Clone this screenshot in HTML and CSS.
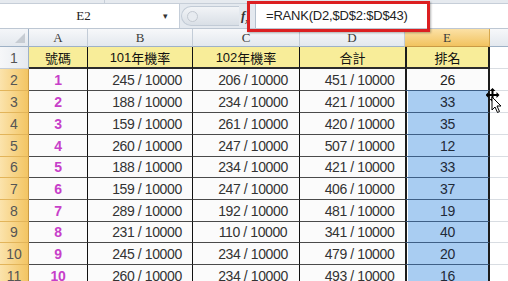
FILE: index.html
```html
<!DOCTYPE html>
<html lang="zh-Hant">
<head>
	<meta charset="UTF-8">
	<title>排名</title>
	<link rel="stylesheet" href="styles.css">
</head>
<body>
	<div class="ribbon-edge"><span></span></div>

	<div class="formula-bar">
		<div class="name-box">
			<span class="name">E2</span>
			<span class="drop">&#9662;</span>
		</div>
		<div class="grip"><span class="dot"></span></div>
		<div class="fx">f<sub>x</sub></div>
		<div class="formula">=RANK(D2,$D$2:$D$43)</div>
	</div>
	<div class="callout"></div>

	<div class="sheet">
		<div class="corner"><span class="tri"></span></div>
		<div class="colhead">A</div>
		<div class="colhead">B</div>
		<div class="colhead">C</div>
		<div class="colhead">D</div>
		<div class="colhead sel">E</div>
		<div class="colhead last"></div>

		<div class="rowhead">1</div>
		<div class="cell title cjk">號碼</div>
		<div class="cell title">101<span class="cjk">年機率</span></div>
		<div class="cell title">102<span class="cjk">年機率</span></div>
		<div class="cell title no-right cjk">合計</div>
		<div class="cell title rank-title cjk">排名</div>
		<div class="cell blank"></div>
	</div>
	<div class="sheet rows" id="rows"></div>

	<svg class="cursor" width="16" height="26" viewBox="0 0 16 26">
		<path d="M6 0 L9 3 H7 V6 H10 V4 L13 7 L10 10 V8 H7 V11 H9 L6 14 L3 11 H5 V8 H2 V10 L-1 7 L2 4 V6 H5 V3 H3 Z" fill="#000" transform="translate(0.5 0)"/>
		<path d="M7 9 V22 L10 19 L12.5 24.5 L14.5 23.5 L12 18 H16 Z" fill="#fff" stroke="#000" stroke-width="1" transform="translate(-1 0)"/>
	</svg>

	<script>
		const data = [
			[1, 245, 206, 451, 26],
			[2, 188, 234, 421, 33],
			[3, 159, 261, 420, 35],
			[4, 260, 247, 507, 12],
			[5, 188, 234, 421, 33],
			[6, 159, 247, 406, 37],
			[7, 289, 192, 481, 19],
			[8, 231, 110, 341, 40],
			[9, 245, 234, 479, 20],
			[10, 260, 234, 493, 16]
		];

		const rows = document.getElementById('rows');
		data.forEach((r, i) => {
			const cells = [
				['rowhead sel', i + 2],
				['cell num', r[0]],
				['cell val', r[1] + ' / 10000'],
				['cell val', r[2] + ' / 10000'],
				['cell val no-right', r[3] + ' / 10000'],
				[i === 0 ? 'cell rank active' : 'cell rank', r[4]],
				['cell blank', '']
			];
			cells.forEach(([cls, text]) => {
				const div = document.createElement('div');
				div.className = cls;
				div.textContent = text;
				rows.appendChild(div);
			});
		});
	</script>
</body>
</html>
```

FILE: styles.css
```css
body {
	margin: 0;
	width: 508px;
	height: 281px;
	overflow: hidden;
	position: relative;
	background: #fff;
	font-family: "Liberation Sans", "Noto Sans CJK TC", sans-serif;
	color: #1e1e1e;
}

.ribbon-edge {
	height: 4px;
	background: #e6eaef;
	border-bottom: 1px solid #c6ced8;
	box-sizing: border-box;
	position: relative;
}
.ribbon-edge span {
	position: absolute;
	left: 104px;
	top: 0;
	width: 1px;
	height: 3px;
	background: #c6ced8;
}

/* formula bar */
.formula-bar {
	display: flex;
	height: 25px;
	background: #e4e9ef;
	border-bottom: 1px solid #bdc7d3;
	box-sizing: border-box;
}
.name-box {
	width: 180px;
	background: #fff;
	border-right: 1px solid #c5ced9;
	display: flex;
	align-items: center;
	box-sizing: border-box;
}
.name-box .name {
	flex: 1;
	text-align: center;
	font-family: "Liberation Serif", serif;
	font-size: 13px;
	color: #222;
	padding-left: 4px;
}
.name-box .drop {
	width: 14px;
	font-size: 9px;
	color: #333;
	margin-right: 2px;
}
.grip {
	width: 58px;
	box-sizing: border-box;
	margin: 2px 0 2px 1px;
	border-radius: 11px 0 0 11px;
	background: linear-gradient(#f2f4f7, #d9dfe6);
	border: 1px solid #c2cbd6;
	border-right: none;
	display: flex;
	align-items: center;
	padding-left: 5px;
}
.grip .dot {
	width: 9px;
	height: 9px;
	border-radius: 50%;
	border: 1px solid #c3c9d1;
	background: #e7ebf0;
}
.fx {
	width: 14px;
	box-sizing: border-box;
	font-family: "Liberation Serif", serif;
	font-style: italic;
	font-weight: bold;
	font-size: 13px;
	color: #333;
	line-height: 23px;
	padding-left: 2px;
}
.fx sub {
	font-size: 8px;
}
.formula {
	flex: 1;
	background: #fff;
	border-left: 1px solid #b4c0cd;
	margin-left: 2px;
	padding-left: 10px;
	font-size: 13px;
	letter-spacing: -0.2px;
	line-height: 24px;
	color: #222;
}

.callout {
	position: absolute;
	left: 247px;
	top: 1px;
	width: 183px;
	height: 31px;
	border: 3px solid #dc1f21;
	box-sizing: border-box;
	box-shadow: 1px 1px 2px rgba(0, 0, 0, 0.3);
}

/* sheet */
.sheet {
	display: grid;
	grid-template-columns: 29px 59px 105px 107px 105px 85px 18px;
	grid-template-rows: 18px 22px;
}
.sheet.rows {
	grid-template-rows: 22px 22px 22px 22px 21px 22px 22px 21px 22px 22px;
}
.sheet > div {
	box-sizing: border-box;
	display: flex;
	align-items: center;
	justify-content: center;
	white-space: nowrap;
	overflow: hidden;
}

.corner {
	background: linear-gradient(#f4f6f9, #e3e8ee);
	border-right: 1px solid #9eb1c6;
	border-bottom: 1px solid #9eb1c6;
	position: relative;
}
.corner .tri {
	position: absolute;
	right: 3px;
	bottom: 3px;
	width: 0;
	height: 0;
	border-left: 10px solid transparent;
	border-bottom: 10px solid #c6ccd3;
}
.colhead {
	background: linear-gradient(#f7f8fa, #e3e8ee);
	border-right: 1px solid #c3ccd7;
	border-bottom: 1px solid #9eb1c6;
	font-family: "Liberation Serif", serif;
	font-size: 13px;
	color: #3b3b3b;
}
.colhead.sel {
	background: linear-gradient(#fbe1a6, #f2c35f);
	border-right: 1px solid #d7a84e;
	border-bottom: 1px solid #c99a45;
}
.colhead.last {
	border-right: none;
}
.rowhead {
	background: linear-gradient(90deg, #f6f7f9, #e6eaef);
	border-right: 1px solid #9eb1c6;
	border-bottom: 1px solid #c3ccd7;
	font-size: 14px;
	color: #555;
}
.rowhead.sel {
	background: linear-gradient(90deg, #fbe3ac, #f3c563);
	border-right: 1px solid #c99a45;
	border-bottom: 1px solid #e2b45a;
}

.cell {
	background: #fbfbfb;
	border-right: 1px solid #111;
	border-bottom: 1px solid #4a4a4a;
	font-size: 14px;
	letter-spacing: -0.4px;
}
.cell.no-right {
	border-right: none;
}
.cell.title {
	background: #f8ed99;
	border-bottom: 2px solid #2b2b2b;
	font-size: 13px;
	letter-spacing: 0;
	color: #111;
}
.cjk {
	font-family: "Noto Sans CJK TC", sans-serif;
	font-size: 13px;
}
.cell.num {
	color: #c73fc9;
	font-weight: bold;
}
.cell.val {
	padding-left: 14px;
	color: #333;
}
.cell.rank, .cell.rank-title {
	border-left: 2px solid #1c1c1c;
	border-right: 2px solid #1c1c1c;
}
.cell.rank {
	background: #a9cdf2;
	border-bottom: 1px solid #3e5f86;
	box-shadow: inset 1px 0 #fff;
	color: #1f2a38;
}
.cell.rank.active {
	background: #fbfbfb;
	color: #222;
}
.cell.blank {
	background: #fff;
	border-right: none;
	border-bottom: 1px solid #d9dde2;
}

.cursor {
	position: absolute;
	left: 486px;
	top: 88px;
}
```
